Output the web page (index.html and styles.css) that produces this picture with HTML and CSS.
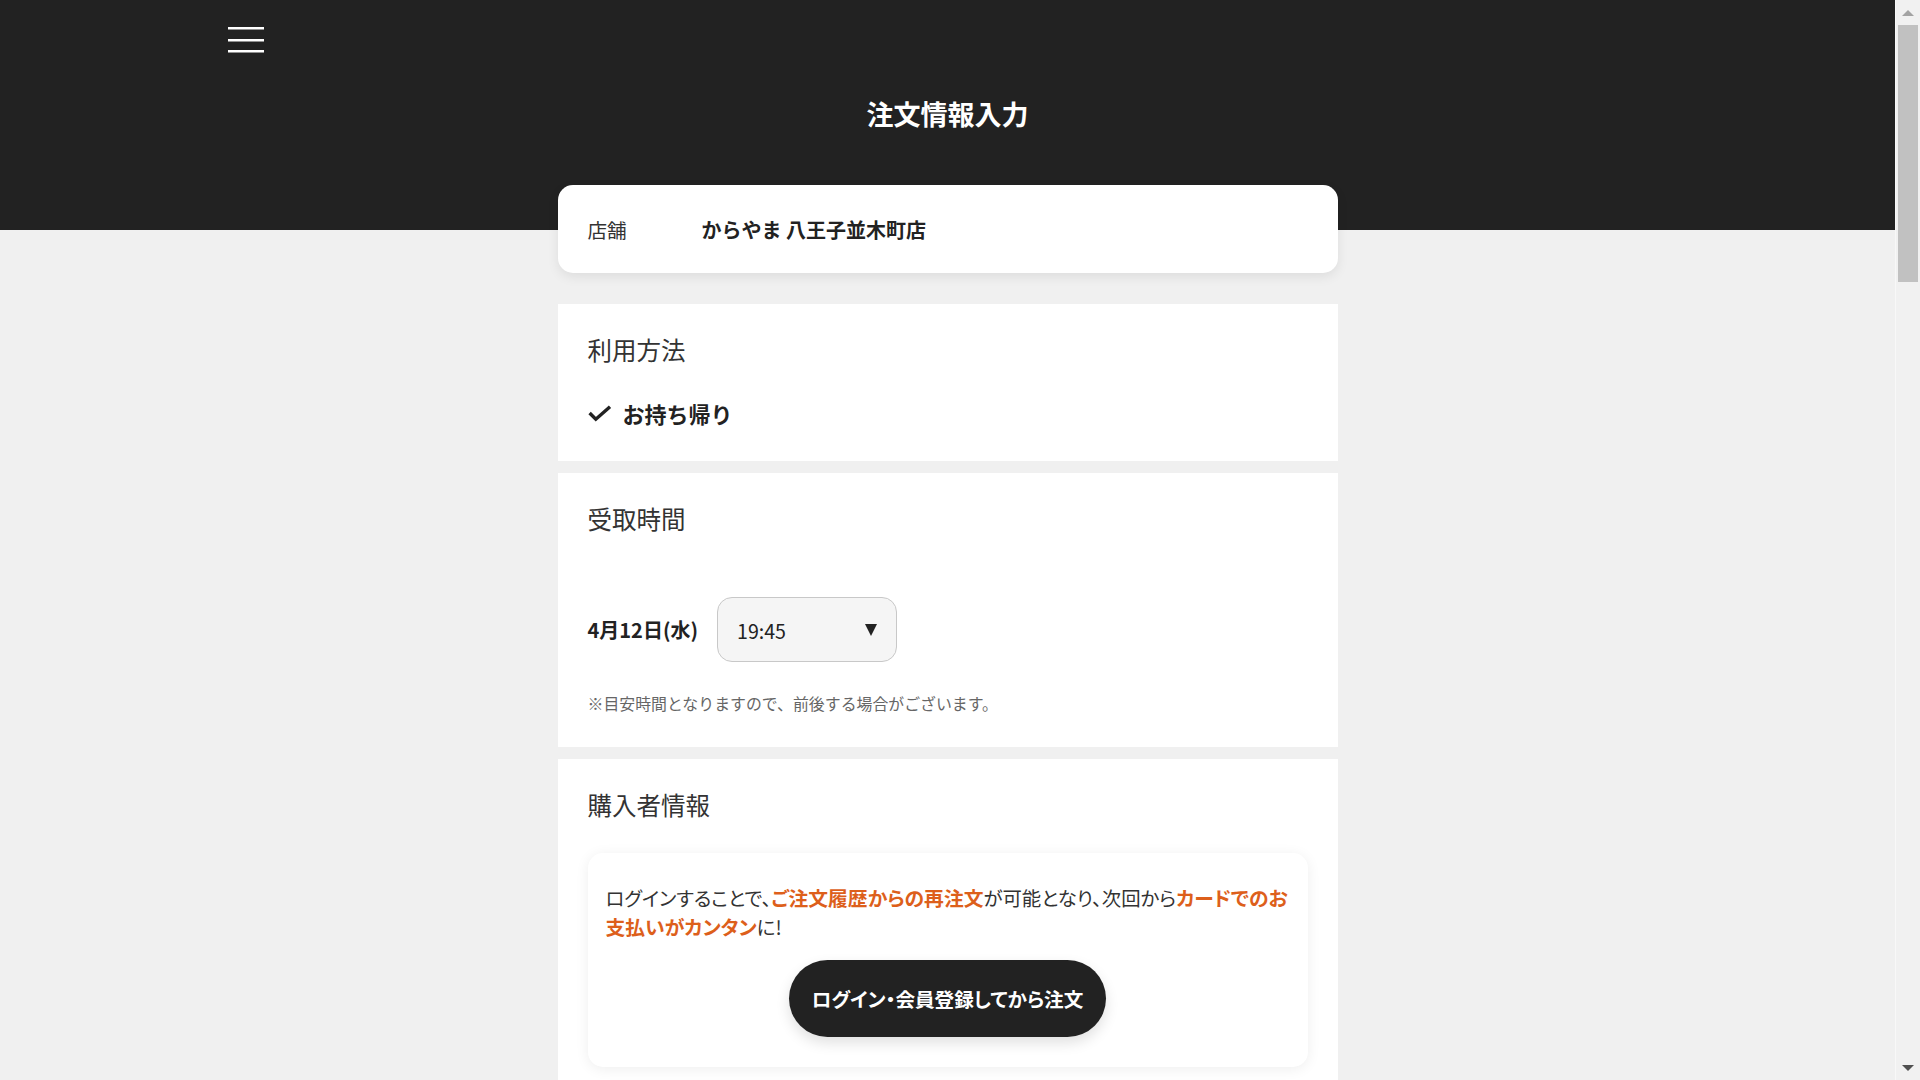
FILE: index.html
```html
<!DOCTYPE html>
<html lang="ja">
<head>
<meta charset="utf-8">
<title>注文情報入力</title>
<link rel="stylesheet" href="styles.css">
</head>
<body>
<div class="page">
  <header class="site-header">
    <div class="header-inner">
      <button class="menu-btn" aria-label="メニュー">
        <svg width="36" height="26" viewBox="0 0 36 26" aria-hidden="true">
          <rect x="0" y="0" width="36" height="2.5" fill="#fff"/>
          <rect x="0" y="12" width="36" height="2.5" fill="#fff"/>
          <rect x="0" y="23" width="36" height="2.5" fill="#fff"/>
        </svg>
      </button>
      <h1 class="page-title">注文情報入力</h1>
    </div>
  </header>

  <main class="main">
    <div class="store-card">
      <span class="store-label">店舗</span>
      <span class="store-name">からやま 八王子並木町店</span>
    </div>

    <section class="section">
      <h2 class="section-title">利用方法</h2>
      <div class="method">
        <svg class="check" width="24" height="17" viewBox="0 0 24 17" aria-hidden="true">
          <path d="M1.6 8 L7.8 14.2 L22 1.8" fill="none" stroke="#222" stroke-width="3.4" stroke-linecap="butt" stroke-linejoin="miter"/>
        </svg>
        <span>お持ち帰り</span>
      </div>
    </section>

    <section class="section">
      <h2 class="section-title">受取時間</h2>
      <div class="time-row">
        <span class="date">4月12日(水)</span>
        <div class="select">
          <span class="select-value">19:45</span>
          <span class="select-arrow"></span>
        </div>
      </div>
      <p class="note">※目安時間となりますので、前後する場合がございます。</p>
    </section>

    <section class="section section-last">
      <h2 class="section-title">購入者情報</h2>
      <div class="login-card">
        <p class="login-text">ログインすることで、<strong>ご注文履歴からの再注文</strong>が可能となり、次回から<strong>カードでのお</strong><br><strong>支払いがカンタン</strong>に!</p>
        <div class="login-actions">
          <button class="login-btn">ログイン・会員登録してから注文</button>
        </div>
      </div>
    </section>
  </main>
</div>

<div class="scrollbar" aria-hidden="true">
  <div class="sb-btn"><span class="sb-up"></span></div>
  <div class="sb-track"><div class="sb-thumb"></div></div>
  <div class="sb-btn"><span class="sb-down"></span></div>
</div>
</body>
</html>
```

FILE: styles.css
```css
html {
  background: #f0f0f0;
}

body {
  margin: 0;
  background: #f0f0f0;
  color: #222;
  font-family: "Noto Sans CJK JP", "Noto Sans", sans-serif;
}

.page {
  min-height: 4330px;
  margin-right: 25px;
}

/* simulated classic scrollbar */
.scrollbar {
  position: fixed;
  top: 0;
  right: 0;
  width: 25px;
  height: 100vh;
  background: #f1f1f1;
  border-left: 1px solid #f8f8f8;
  box-sizing: border-box;
  display: flex;
  flex-direction: column;
}
.sb-btn {
  height: 25px;
  flex: none;
  display: flex;
  align-items: center;
  justify-content: center;
}
.sb-up {
  width: 0;
  height: 0;
  border-left: 6px solid transparent;
  border-right: 6px solid transparent;
  border-bottom: 6px solid #a3a3a3;
}
.sb-down {
  width: 0;
  height: 0;
  border-left: 6px solid transparent;
  border-right: 6px solid transparent;
  border-top: 6px solid #505050;
}
.sb-track {
  flex: 1;
  padding: 0 2px 0 2px;
}
.sb-thumb {
  height: 257px;
  background: #c1c1c1;
}

.site-header {
  height: 230px;
  background: #222;
}

.header-inner {
  max-width: 1440px;
  margin: 0 auto;
  padding-top: 27px;
  display: flex;
  flex-direction: column;
}

.menu-btn {
  align-self: flex-start;
  width: 36px;
  height: 26px;
  padding: 0;
  margin: 0;
  border: 0;
  background: none;
  display: block;
}
.menu-btn svg {
  display: block;
}

.page-title {
  margin: 41px 0 0;
  text-align: center;
  color: #fff;
  font-size: 27px;
  line-height: 40px;
  font-weight: 700;
}

.main {
  width: 780px;
  margin: -45px auto 0;
}

.store-card {
  height: 88px;
  background: #fff;
  border-radius: 15px;
  box-shadow: 0 4px 12px rgba(0, 0, 0, 0.08);
  display: flex;
  align-items: center;
  padding: 0 30px;
  font-size: 19.6px;
  margin-bottom: 31px;
}

.store-label {
  width: 114px;
  color: #333;
}

.store-name {
  font-weight: 700;
  color: #222;
  font-size: 20px;
}

.section {
  background: #fff;
  padding: 28px 30px 31px;
  margin-bottom: 12px;
}

.section-title {
  margin: 0;
  font-size: 24.5px;
  line-height: 36px;
  font-weight: 400;
  color: #333;
}

.method {
  margin-top: 29px;
  display: flex;
  align-items: center;
  font-size: 22px;
  line-height: 33px;
  font-weight: 700;
}
.check {
  display: block;
  margin-right: 11px;
}

.time-row {
  margin-top: 60px;
  display: flex;
  align-items: center;
}

.date {
  font-size: 20px;
  font-weight: 700;
  margin-right: 19px;
}

.select {
  width: 180px;
  height: 65px;
  box-sizing: border-box;
  border: 1px solid #c8c8c8;
  border-radius: 15px;
  background: #f5f5f5;
  display: flex;
  align-items: center;
  justify-content: space-between;
  padding: 0 19px 0 19px;
}
.select-value {
  font-size: 19.6px;
  color: #222;
  padding-top: 2px;
}
.select-arrow {
  width: 0;
  height: 0;
  border-left: 6.5px solid transparent;
  border-right: 6.5px solid transparent;
  border-top: 12px solid #222;
}

.note {
  margin: 30px 0 0;
  font-size: 15.9px;
  line-height: 24px;
  color: #666;
}

.section-last {
  padding-bottom: 60px;
}

.login-card {
  margin-top: 30px;
  background: #fff;
  border-radius: 15px;
  box-shadow: 0 2px 14px rgba(0, 0, 0, 0.07);
  padding: 31px 18px 30px 18px;
}

.login-text {
  margin: 0;
  font-size: 19.4px;
  line-height: 28.5px;
  color: #333;
  font-feature-settings: "palt";
  white-space: nowrap;
}
.login-text strong {
  color: #dd5f1b;
  font-weight: 700;
  font-size: 19.8px;
}

.login-actions {
  margin-top: 19px;
  display: flex;
  justify-content: center;
}

.login-btn {
  width: 317px;
  height: 77px;
  border: 0;
  border-radius: 39px;
  background: #222;
  color: #fff;
  font-family: "Noto Sans CJK JP", "Noto Sans", sans-serif;
  font-size: 19.6px;
  font-weight: 700;
  font-feature-settings: "palt";
  box-shadow: 0 6px 14px rgba(0, 0, 0, 0.12);
  padding: 0;
}
```
